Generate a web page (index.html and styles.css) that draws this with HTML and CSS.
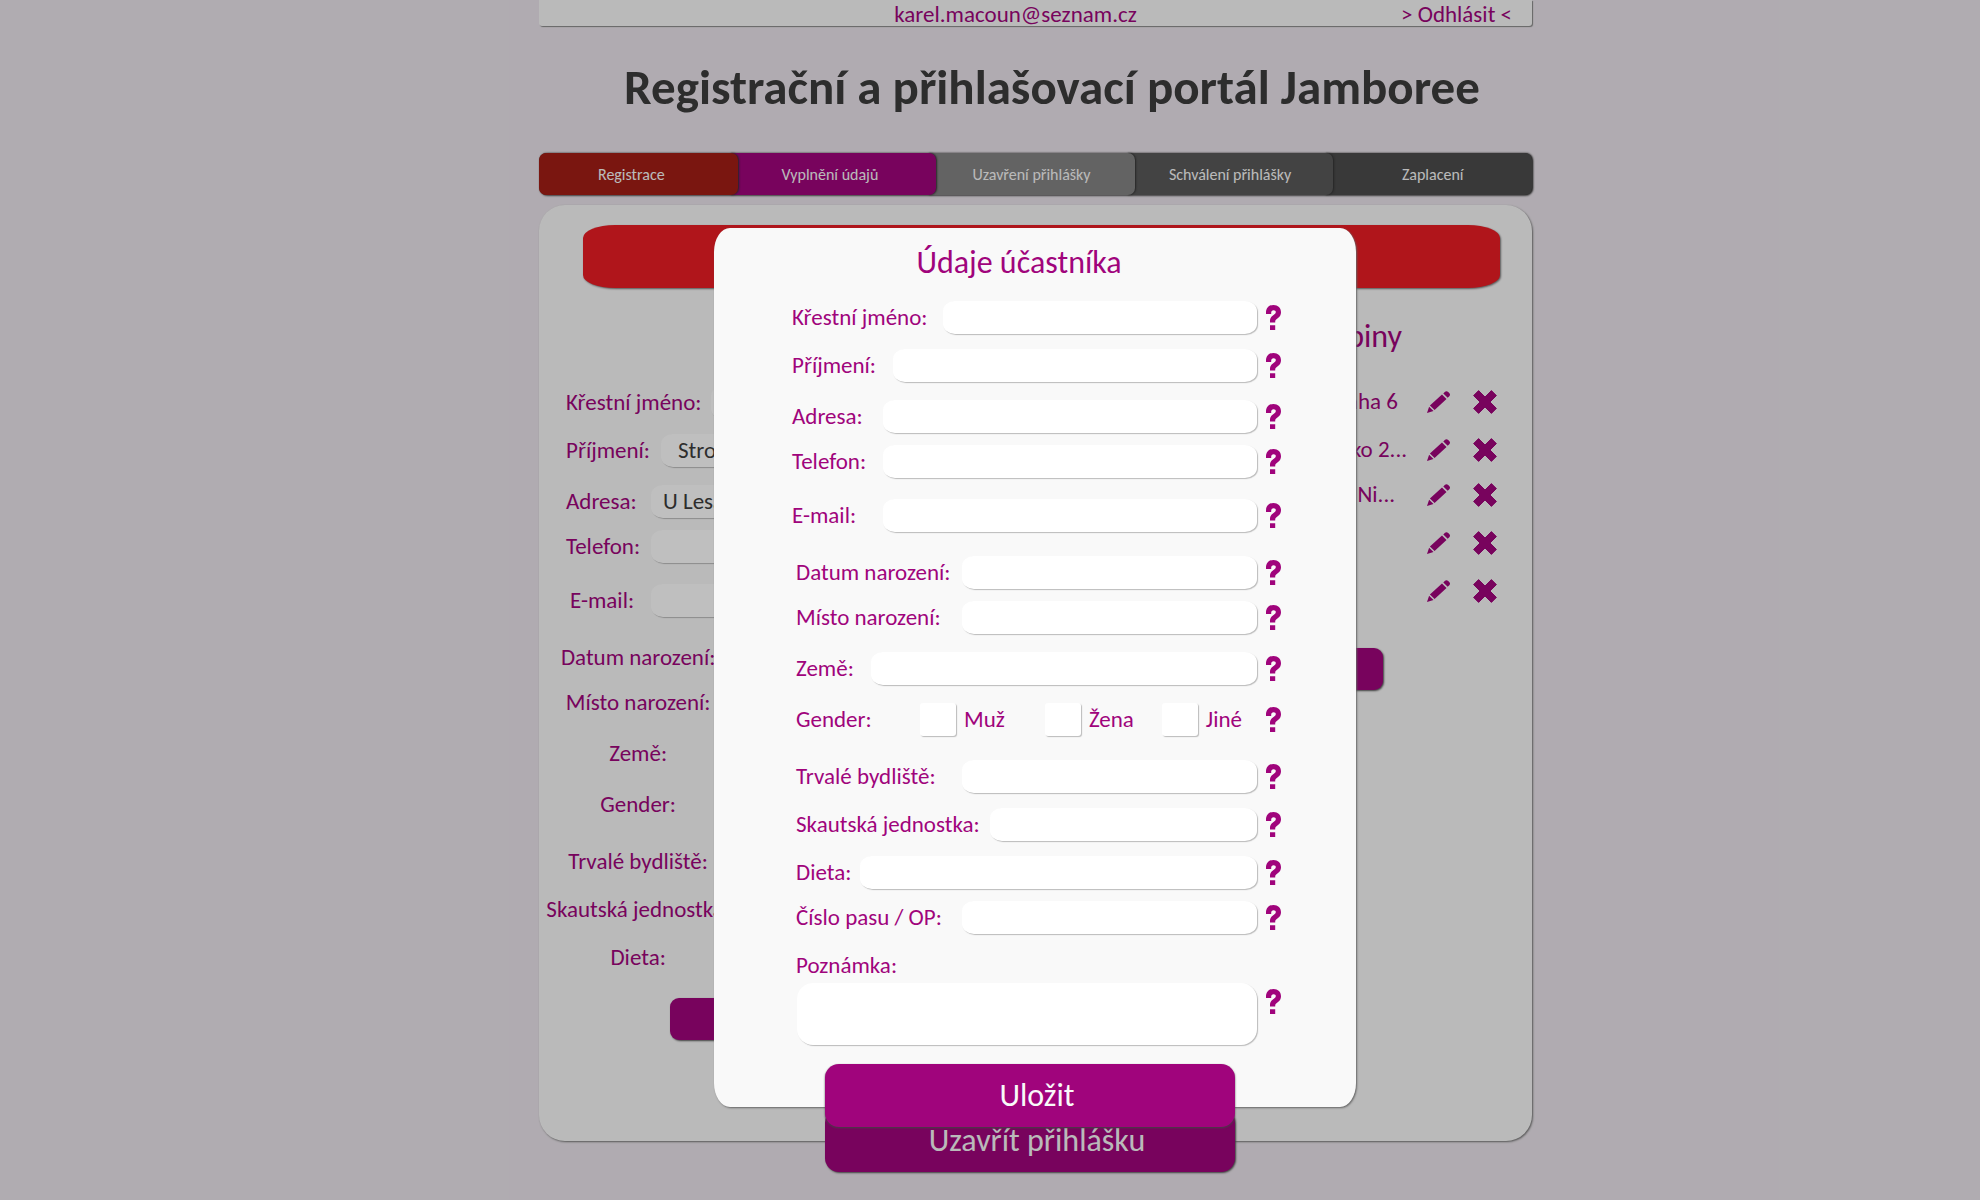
FILE: index.html
```html
<!DOCTYPE html>
<html lang="cs">
<head>
<meta charset="utf-8">
<meta name="viewport" content="width=device-width, initial-scale=1">
<title>Registrační a přihlašovací portál Jamboree</title>
<link rel="stylesheet" href="styles.css">
</head>
<body>
<svg class="sprite" aria-hidden="true">
  <symbol id="help" viewBox="0 0 15 25">
    <path d="M0 9V7.500C0 3 3 0 7.500 0S15 3 15 7.200c0 2.700-1.200 4.500-3 5.900-1.800 1.300-2.800 2-2.800 3.700v.7H4v-1.700c0-2.500 1-3.900 2.900-5.300C8.800 9.100 9.800 8.500 9.800 7c0-1.100-.8-1.800-2.200-1.800C6 5.200 5.200 6.200 5.200 7.500V9zM4 20.200h5.200V25H4z"/>
  </symbol>
  <symbol id="pencil" viewBox="0 0 23 22">
    <path d="M18 .8c1-1 2.200-.8 3.200.2l1 1c1 1 1.100 2.200.1 3.200l-1.600 1.600-4.400-4.300zM15 3.500l4.500 4.400L7.600 19 2.900 14.600zM2.100 15.700l4.400 4.300L0 22z"/>
  </symbol>
  <symbol id="cross" viewBox="0 0 24 24">
    <path d="M5.600.6 12 7 18.400.6l5 5L17 12l6.400 6.400-5 5L12 17l-6.400 6.400-5-5L7 12 .6 5.600z" stroke-width="1" stroke="currentColor" stroke-linejoin="round"/>
  </symbol>
</svg>

<div class="page">
  <header class="topbar">
    <span class="user">karel.macoun@seznam.cz</span>
    <a class="logout" href="#odhlasit">&gt; Odhlásit &lt;</a>
  </header>

  <h1 class="title">Registrační a přihlašovací portál Jamboree</h1>

  <ol class="steps">
    <li class="step step-done">Registrace</li>
    <li class="step step-active">Vyplnění údajů</li>
    <li class="step step-next">Uzavření přihlášky</li>
    <li class="step step-later">Schválení přihlášky</li>
    <li class="step step-last">Zaplacení</li>
  </ol>

  <main class="panel">
    <div class="alert" role="alert"></div>
    <div class="columns">
      <form class="own">
        <div class="row gap-m"><label class="own-label" for="o1">Křestní jméno:</label><input class="field w-s" id="o1"></div>
        <div class="row gap-l"><label class="own-label" for="o2">Příjmení:</label><input class="field field-name w-l" id="o2" value="Strom"></div>
        <div class="row gap-s"><label class="own-label" for="o3">Adresa:</label><input class="field w-xl" id="o3" value="U Lesa"></div>
        <div class="row gap-xl"><label class="own-label" for="o4">Telefon:</label><input class="field w-xl" id="o4"></div>
        <div class="row gap-xxl"><label class="own-label shift" for="o5">E-mail:</label><input class="field w-xl" id="o5"></div>
        <div class="row gap-s"><label class="own-center" for="o6">Datum narození:</label><input class="field" id="o6"></div>
        <div class="row gap-l"><label class="own-center" for="o7">Místo narození:</label><input class="field" id="o7"></div>
        <div class="row gap-l"><label class="own-center" for="o8">Země:</label><input class="field" id="o8"></div>
        <div class="row gap-xxl"><label class="own-center" for="o9">Gender:</label><input class="field" id="o9"></div>
        <div class="row gap-m"><label class="own-center" for="o10">Trvalé bydliště:</label><input class="field" id="o10"></div>
        <div class="row gap-m"><label class="own-center" for="o11">Skautská jednostka:</label><input class="field" id="o11"></div>
        <div class="row"><label class="own-center" for="o12">Dieta:</label><input class="field" id="o12"></div>
        <button class="btn btn-small own-save" type="button" aria-label="Uložit údaje"></button>
      </form>

      <section class="group">
        <h2 class="group-title">Členové skupiny</h2>
        <ul class="members">
          <li class="row gap-m"><span class="member">Praha 6</span><button class="icon-btn" aria-label="Upravit"><svg class="pencil"><use href="#pencil"/></svg></button><button class="icon-btn" aria-label="Smazat"><svg class="cross"><use href="#cross"/></svg></button></li>
          <li class="row gap-s"><span class="member member-long">Brandýsko 2...</span><button class="icon-btn" aria-label="Upravit"><svg class="pencil"><use href="#pencil"/></svg></button><button class="icon-btn" aria-label="Smazat"><svg class="cross"><use href="#cross"/></svg></button></li>
          <li class="row gap-m"><span class="member member-short">Nový Ni...</span><button class="icon-btn" aria-label="Upravit"><svg class="pencil"><use href="#pencil"/></svg></button><button class="icon-btn" aria-label="Smazat"><svg class="cross"><use href="#cross"/></svg></button></li>
          <li class="row gap-m"><span class="member"></span><button class="icon-btn" aria-label="Upravit"><svg class="pencil"><use href="#pencil"/></svg></button><button class="icon-btn" aria-label="Smazat"><svg class="cross"><use href="#cross"/></svg></button></li>
          <li class="row"><span class="member"></span><button class="icon-btn" aria-label="Upravit"><svg class="pencil"><use href="#pencil"/></svg></button><button class="icon-btn" aria-label="Smazat"><svg class="cross"><use href="#cross"/></svg></button></li>
        </ul>
        <button class="btn btn-small group-add" type="button" aria-label="Přidat člena"></button>
      </section>
    </div>
    <button class="btn btn-big close-app" type="button">Uzavřít přihlášku</button>
  </main>
</div>

<div class="overlay">
  <div class="overlay-page">
    <form class="modal" role="dialog" aria-labelledby="modal-title">
      <h2 class="modal-title" id="modal-title">Údaje účastníka</h2>
      <div class="fields">
        <div class="row gap-m"><label for="f1">Křestní jméno:</label><input class="field w-s" id="f1"><svg class="help"><use href="#help"/></svg></div>
        <div class="row gap-l"><label for="f2">Příjmení:</label><input class="field w-l" id="f2"><svg class="help"><use href="#help"/></svg></div>
        <div class="row gap-s"><label for="f3">Adresa:</label><input class="field w-xl" id="f3"><svg class="help"><use href="#help"/></svg></div>
        <div class="row gap-xl"><label for="f4">Telefon:</label><input class="field w-xl" id="f4"><svg class="help"><use href="#help"/></svg></div>
        <div class="row gap-xxl"><label for="f5">E-mail:</label><input class="field w-xl" id="f5"><svg class="help"><use href="#help"/></svg></div>
        <div class="row indent gap-s"><label for="f6">Datum narození:</label><input class="field w-xs" id="f6"><svg class="help"><use href="#help"/></svg></div>
        <div class="row indent gap-l"><label for="f7">Místo narození:</label><input class="field w-xs" id="f7"><svg class="help"><use href="#help"/></svg></div>
        <div class="row indent gap-l"><label for="f8">Země:</label><input class="field w-xxl" id="f8"><svg class="help"><use href="#help"/></svg></div>
        <div class="row indent gap-xxl" role="group" aria-labelledby="gender">
          <span id="gender">Gender:</span>
          <div class="choices">
            <label class="choice"><input class="check" type="checkbox">Muž</label>
            <label class="choice choice-mid"><input class="check" type="checkbox">Žena</label>
            <label class="choice choice-last"><input class="check" type="checkbox">Jiné</label>
          </div>
          <svg class="help"><use href="#help"/></svg>
        </div>
        <div class="row indent gap-m"><label for="f10">Trvalé bydliště:</label><input class="field w-xs" id="f10"><svg class="help"><use href="#help"/></svg></div>
        <div class="row indent gap-m"><label for="f11">Skautská jednostka:</label><input class="field w-xxs" id="f11"><svg class="help"><use href="#help"/></svg></div>
        <div class="row indent gap-s"><label for="f12">Dieta:</label><input class="field w-full" id="f12"><svg class="help"><use href="#help"/></svg></div>
        <div class="row indent gap-m"><label for="f13">Číslo pasu / OP:</label><input class="field w-xs" id="f13"><svg class="help"><use href="#help"/></svg></div>
        <div class="row indent"><label for="f14">Poznámka:</label></div>
        <div class="note"><textarea class="field note-field" id="f14"></textarea><svg class="help"><use href="#help"/></svg></div>
      </div>
      <button class="btn btn-big save" type="button">Uložit</button>
    </form>
  </div>
</div>
</body>
</html>
```
FILE: styles.css
```css
* { box-sizing: border-box; }

body {
  position: relative;
  margin: 0;
  min-height: 100vh;
  background: #ebe5ec;
  color: #a0047c;
  font: 23px/33px Carlito, Lato, sans-serif;
}

h1, h2, ol, ul { margin: 0; padding: 0; list-style: none; font-weight: 400; }
button, input, textarea { font: inherit; border: 0; margin: 0; }
button { cursor: pointer; }
svg { display: block; fill: currentColor; flex: none; }
.sprite { position: absolute; width: 0; height: 0; }

.page, .overlay-page {
  width: min(1084px, 100%);
  margin: 0 auto;
  padding-left: 91px;
}

.topbar {
  display: grid;
  grid-template-columns: 1fr auto 1fr;
  align-items: end;
  height: 26px;
  padding-right: 20px;
  line-height: 23px;
  background: #f9f9f9;
  border-radius: 0 0 3px 3px;
  box-shadow: 1px 1px 1px #888;
}
.user { grid-column: 2; padding-right: 20px; }
.logout { justify-self: end; color: inherit; text-decoration: none; }

.title {
  padding: 30px 0 35px 33px;
  color: #3c3c3c;
  font-size: 49px;
  font-weight: 700;
  line-height: 62px;
  text-align: center;
}

.steps {
  display: grid;
  grid-template-columns: repeat(5, 1fr);
  isolation: isolate;
  border-radius: 8px;
  background: #4c4c4c;
  box-shadow: 1px 1px 2px #777;
}
.step {
  position: relative;
  margin-left: -8px;
  padding: 2px 14px 0 8px;
  color: #f9f9f9;
  font-size: 16px;
  line-height: 40px;
  text-align: center;
  border-radius: 0 7px 7px 0;
  box-shadow: 1px 0 2px #333;
}
.step-done { z-index: 4; margin-left: 0; padding-left: 0; border-radius: 7px; background: #a31e16; }
.step-active { z-index: 3; background: #a0047c; }
.step-next { z-index: 2; padding-right: 8px; background: #848484; }
.step-later { z-index: 1; padding-right: 8px; background: #5a5a5a; }
.step-last { padding-right: 0; background: #4c4c4c; }

.panel {
  display: flow-root;
  margin-top: 10px;
  padding-top: 20px;
  background: #f9f9f9;
  border-radius: 26px;
  box-shadow: 1px 1px 2px #777;
}
.alert {
  height: 63px;
  margin: 0 32px 0 44px;
  background: #eb1c24;
  border-radius: 32px / 13px;
  box-shadow: 1px 1px 2px #777;
}
.columns { display: flex; justify-content: space-between; }

.row { display: flex; align-items: center; height: 33px; white-space: nowrap; }
.gap-s { margin-bottom: 12px; }
.gap-m { margin-bottom: 15px; }
.gap-l { margin-bottom: 18px; }
.gap-xl { margin-bottom: 21px; }
.gap-xxl { margin-bottom: 24px; }

.field {
  height: 33px;
  min-width: 0;
  margin-left: auto;
  padding: 0 12px;
  color: #3c3c3c;
  background: #fff;
  border-radius: 12px / 10px;
  box-shadow: 1px 1px 1px #bbb;
}
.field-name { padding-left: 17px; }
.w-xxs { width: 267px; }
.w-xs { width: 295px; }
.w-s { width: 314px; }
.w-l { width: 364px; }
.w-xl { width: 374px; }
.w-xxl { width: 386px; }
.w-full { width: 397px; }

.own { width: 486px; padding-top: 98px; }
.own-label { padding-left: 27px; }
.shift { padding-left: 31px; }
.own-center { width: 200px; text-align: center; }
.own-save { margin: 24px 0 0 131px; }

.group { width: 380px; padding: 31px 35px 0 0; }
.group-title { padding-right: 95px; font-size: 32px; line-height: 36px; text-align: right; }
.members { margin-top: 30px; }
.member { flex: 1; padding-right: 12px; text-align: right; }
.member-long { padding-right: 3px; }
.member-short { padding-right: 15px; }
.icon-btn { padding: 0; background: none; color: inherit; margin-left: 17px; }
.icon-btn + .icon-btn { margin-left: 23px; }
.pencil { width: 23px; height: 22px; }
.cross { width: 24px; height: 24px; }
.group-add { margin: 41px 0 0 31px; }

.btn {
  display: block;
  color: #f9f9f9;
  background: #a0047c;
  box-shadow: 1px 1px 2px #555;
}
.btn-small { width: 200px; height: 42px; border-radius: 9px; }
.btn-big {
  width: 410px;
  height: 63px;
  padding: 0 0 0 14px;
  font-size: 32px;
  line-height: 63px;
  border-radius: 14px;
}
/* The closing button hangs half below the panel */
.close-app { margin: 69px auto -31px 286px; }

/* Dimmed layer with the participant dialog */
.overlay {
  position: absolute;
  inset: 0;
  background: rgba(0, 0, 0, .25);
}
.modal {
  display: flow-root;
  width: 642px;
  margin: 228px 0 0 175px;
  padding: 17px 75px 0 78px;
  background: #f9f9f9;
  border-radius: 16px / 24px;
  box-shadow: 1px 1px 2px #666;
}
.modal-title { font-size: 32px; line-height: 36px; padding-right: 35px; text-align: center; }
.fields { margin-top: 20px; }
.indent { padding-left: 4px; }
.help { width: 15px; height: 25px; margin-left: 9px; }
.choices { display: flex; margin-left: auto; padding-right: 15px; }
.choice { display: flex; align-items: center; }
.choice-mid { margin-left: 40px; }
.choice-last { margin-left: 28px; }
.check {
  appearance: none;
  width: 36px;
  height: 33px;
  margin-right: 8px;
  background: #fff;
  border-radius: 3px;
  box-shadow: 1px 1px 1px #bbb;
}
.note { display: flex; margin-top: 1px; padding-left: 5px; }
.note .help { margin-top: 6px; }
.note-field { display: block; flex: 1; height: 62px; resize: none; border-radius: 16px; }
.save { margin: 19px 0 -20px 33px; box-shadow: 0 1px 2px #444; }
```
